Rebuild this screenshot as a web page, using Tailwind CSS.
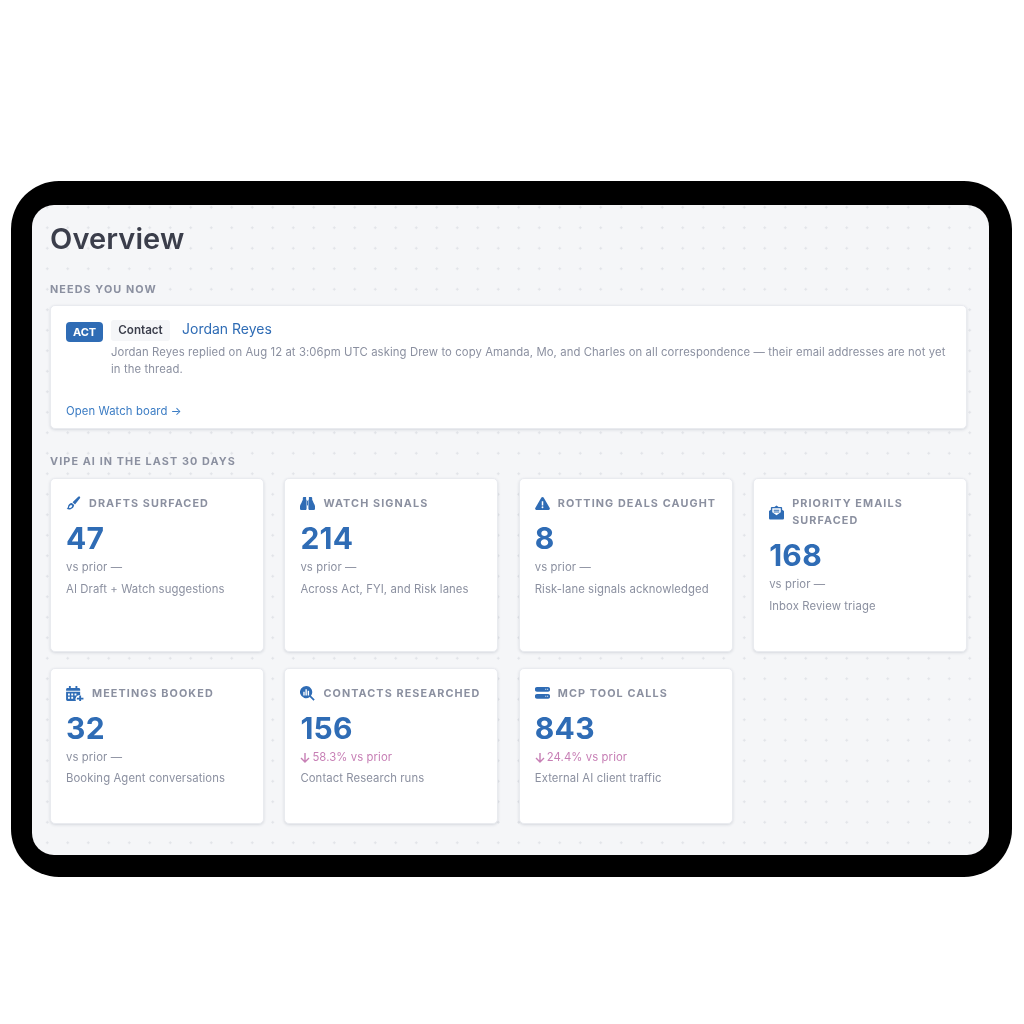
<!DOCTYPE html>
<html lang="en">
<head>
  <meta charset="UTF-8" />
  <title>Overview</title>
  <script src="https://cdn.jsdelivr.net/npm/@tailwindcss/browser@4"></script>
</head>
<body class="bg-white font-['Inter',sans-serif]">
  <div class="h-[1024px] pt-[181px] pl-[11px]">
    <div class="w-[1001px] h-[696px] bg-black rounded-[48px] pt-[24px] pl-[21px] blur-[0.35px]">
      <main class="w-[957px] h-[650px] rounded-[22px] overflow-hidden bg-[#f5f6f8] bg-[radial-gradient(circle,#e1e3e8_1px,transparent_1.2px)] bg-[size:20.5px_20.5px] bg-[position:5px_-8px] pt-[16px] pl-[18px] pr-[22px]">
        <h1 class="text-[29px] leading-[36px] font-semibold tracking-[0.1px] text-[#3b3e4b]">Overview</h1>

        <h2 class="mt-[26px] text-[10.8px] leading-[14px] font-bold tracking-[1.1px] text-[#8b90a0]">NEEDS YOU NOW</h2>
        <section class="mt-[8px] h-[124px] bg-white rounded-[5px] border border-[#e9ebef] shadow-[0_1px_3px_rgba(30,40,70,0.14)] pt-[14px] px-[15px]">
          <div class="flex">
            <span class="mt-[2px] w-[37px] h-[20px] rounded-[4px] bg-[#2f6cb5] text-white text-[11px] leading-[20px] font-bold text-center">ACT</span>
            <div class="ml-[8px] flex-1">
              <div class="flex items-start">
                <span class="h-[21px] w-[59px] rounded-[3px] bg-[#f5f6f8] text-[#3b3e4b] text-[11.6px] leading-[21px] font-semibold text-center">Contact</span>
                <span class="ml-[12px] -mt-[1px] text-[14px] leading-[20px] text-[#2f6cb5]">Jordan Reyes</span>
              </div>
              <p class="mt-[3px] text-[11.3px] leading-[17px] tracking-[0.1px] text-[#8b90a0]">Jordan Reyes replied on Aug 12 at 3:06pm UTC asking Drew to copy Amanda, Mo, and Charles on all correspondence — their email addresses are not yet in the thread.</p>
            </div>
          </div>
          <a class="block mt-[25px] text-[11.3px] leading-[16px] tracking-[0.1px] text-[#3b7cc4]">Open Watch board →</a>
        </section>

        <h2 class="mt-[26px] text-[10.8px] leading-[14px] font-bold tracking-[1.1px] text-[#8b90a0]">VIPE AI IN THE LAST 30 DAYS</h2>
        <div class="mt-[9px] grid grid-cols-4 grid-rows-[174px_156px] gap-x-[20.5px] gap-y-[16px]">

          <article class="bg-white rounded-[5px] border border-[#e9ebef] shadow-[0_1px_3px_rgba(30,40,70,0.14)] pt-[16px] px-[15px]">
            <div class="flex items-center gap-[8px] min-h-[17px]">
              <svg class="w-[15px] h-[15px] text-[#2f6cb5]" viewBox="0 0 16 16" fill="currentColor"><path d="M14.6.6c.6.4.7 1.200.3 1.800L9.600 9 7 6.600 13 .9c.5-.5 1.100-.6 1.600-.3z"/><path fill-rule="evenodd" d="M6.300 7.400l2.400 2.300c-.2 2.200-1.700 3.900-3.800 4.500-1.400.4-3 .2-4.200-.6.9-.4 1.200-1 1.300-1.900.2-2.300 2-4.200 4.300-4.300zM5.500 9.500c-1 .2-1.800 1-2 2-.1.500-.2 1-.4 1.300 1.700.2 3.300-1 3.600-2.500L5.500 9.500z"/></svg>
              <h3 class="text-[10.8px] leading-[17px] font-bold tracking-[1.1px] text-[#8b90a0]">DRAFTS SURFACED</h3>
            </div>
            <p class="mt-[7px] text-[30px] leading-[38px] font-bold tracking-[0.3px] text-[#2f6cb5]">47</p>
            <p class="mt-[2px] text-[11.3px] leading-[16px] tracking-[0.1px] text-[#8b90a0]">vs prior —</p>
            <p class="mt-[6px] text-[11.3px] leading-[16px] tracking-[0.1px] text-[#8b90a0]">AI Draft + Watch suggestions</p>
          </article>

          <article class="bg-white rounded-[5px] border border-[#e9ebef] shadow-[0_1px_3px_rgba(30,40,70,0.14)] pt-[16px] px-[15px]">
            <div class="flex items-center gap-[8px] min-h-[17px]">
              <svg class="w-[15px] h-[15px] text-[#2f6cb5]" viewBox="0 0 16 16" fill="currentColor"><path d="M4 1h2.500v3H7v9.500c0 .8-.7 1.500-1.500 1.500h-4C.7 15 0 14.300 0 13.500V11c0-2 1.500-3 2-5l1-2V2c0-.6.4-1 1-1z"/><path d="M12 1H9.500v3H9v9.500c0 .8.700 1.500 1.500 1.500h4c.8 0 1.500-.7 1.500-1.500V11c0-2-1.500-3-2-5l-1-2V2c0-.6-.4-1-1-1z"/><rect x="7.500" y="5" width="1" height="5"/></svg>
              <h3 class="text-[10.8px] leading-[17px] font-bold tracking-[1.1px] text-[#8b90a0]">WATCH SIGNALS</h3>
            </div>
            <p class="mt-[7px] text-[30px] leading-[38px] font-bold tracking-[0.3px] text-[#2f6cb5]">214</p>
            <p class="mt-[2px] text-[11.3px] leading-[16px] tracking-[0.1px] text-[#8b90a0]">vs prior —</p>
            <p class="mt-[6px] text-[11.3px] leading-[16px] tracking-[0.1px] text-[#8b90a0]">Across Act, FYI, and Risk lanes</p>
          </article>

          <article class="bg-white rounded-[5px] border border-[#e9ebef] shadow-[0_1px_3px_rgba(30,40,70,0.14)] pt-[16px] px-[15px]">
            <div class="flex items-center gap-[8px] min-h-[17px]">
              <svg class="w-[15px] h-[15px] text-[#2f6cb5]" viewBox="0 0 16 16" fill="currentColor"><path fill-rule="evenodd" d="M8 1c.5 0 .9.300 1.200.700l6.500 11c.5.900-.1 2.300-1.200 2.300H1.500C.4 15-.2 13.600.3 12.700l6.500-11C7.100 1.300 7.500 1 8 1zM7.200 5.500v4.500h1.600V5.500H7.200zM8 11a1 1 0 1 0 0 2 1 1 0 0 0 0-2z"/></svg>
              <h3 class="text-[10.8px] leading-[17px] font-bold tracking-[1.1px] text-[#8b90a0]">ROTTING DEALS CAUGHT</h3>
            </div>
            <p class="mt-[7px] text-[30px] leading-[38px] font-bold tracking-[0.3px] text-[#2f6cb5]">8</p>
            <p class="mt-[2px] text-[11.3px] leading-[16px] tracking-[0.1px] text-[#8b90a0]">vs prior —</p>
            <p class="mt-[6px] text-[11.3px] leading-[16px] tracking-[0.1px] text-[#8b90a0]">Risk-lane signals acknowledged</p>
          </article>

          <article class="bg-white rounded-[5px] border border-[#e9ebef] shadow-[0_1px_3px_rgba(30,40,70,0.14)] pt-[16px] px-[15px]">
            <div class="flex items-center gap-[8px] min-h-[17px]">
              <svg class="w-[15px] h-[15px] shrink-0 text-[#2f6cb5]" viewBox="0 0 16 16" fill="currentColor"><path fill-rule="evenodd" d="M8 .5l2.200 1.500H13c.6 0 1 .4 1 1v2l2 1.500V14c0 .8-.7 1.500-1.500 1.500h-13C.7 15.500 0 14.800 0 14V6.500L2 5V3c0-.6.4-1 1-1h2.800L8 .5zM3.500 3.500v4.300L8 10.800l4.500-3V3.500h-9zM5 5h6v1H5V5zm0 2h6v1H5V7z"/></svg>
              <h3 class="text-[10.8px] leading-[17px] font-bold tracking-[1.1px] text-[#8b90a0]">PRIORITY EMAILS SURFACED</h3>
            </div>
            <p class="mt-[7px] text-[30px] leading-[38px] font-bold tracking-[0.3px] text-[#2f6cb5]">168</p>
            <p class="mt-[2px] text-[11.3px] leading-[16px] tracking-[0.1px] text-[#8b90a0]">vs prior —</p>
            <p class="mt-[6px] text-[11.3px] leading-[16px] tracking-[0.1px] text-[#8b90a0]">Inbox Review triage</p>
          </article>

          <article class="bg-white rounded-[5px] border border-[#e9ebef] shadow-[0_1px_3px_rgba(30,40,70,0.14)] pt-[16px] px-[15px]">
            <div class="flex items-center gap-[8px] min-h-[17px]">
              <svg class="w-[18px] h-[15px] text-[#2f6cb5]" viewBox="0 0 19 16" fill="currentColor"><path fill-rule="evenodd" d="M3 0h2v2h5V0h2v2h1.500c.8 0 1.500.7 1.500 1.500V5H0V3.500C0 2.700.7 2 1.500 2H3V0zM0 6h15v3.500a4.500 4.500 0 0 0-4.500 6.500H1.500C.7 16 0 15.300 0 14.500V6zm2 2v2h2V8H2zm3.500 0v2h2V8h-2zM9 8v2h2V8H9zm-7 3.500v2h2v-2H2zm3.500 0v2h2v-2h-2z"/><path d="M14 10h2v2.500h2.500v2H16V16h-2v-1.500h-2.500v-2H14V10z"/></svg>
              <h3 class="text-[10.8px] leading-[17px] font-bold tracking-[1.1px] text-[#8b90a0]">MEETINGS BOOKED</h3>
            </div>
            <p class="mt-[7px] text-[30px] leading-[38px] font-bold tracking-[0.3px] text-[#2f6cb5]">32</p>
            <p class="mt-[2px] text-[11.3px] leading-[16px] tracking-[0.1px] text-[#8b90a0]">vs prior —</p>
            <p class="mt-[5px] text-[11.3px] leading-[16px] tracking-[0.1px] text-[#8b90a0]">Booking Agent conversations</p>
          </article>

          <article class="bg-white rounded-[5px] border border-[#e9ebef] shadow-[0_1px_3px_rgba(30,40,70,0.14)] pt-[16px] px-[15px]">
            <div class="flex items-center gap-[8px] min-h-[17px]">
              <svg class="w-[15px] h-[15px] text-[#2f6cb5]" viewBox="0 0 16 16" fill="currentColor"><path fill-rule="evenodd" d="M6.500 0a6.500 6.500 0 0 1 5.200 10.400l4 4-1.300 1.300-4-4A6.500 6.500 0 1 1 6.500 0zM3.500 6v4h1.500V6H3.500zm2.300-2.500V10h1.500V3.500H5.800zM8.200 5v5h1.500V5H8.200z"/></svg>
              <h3 class="text-[10.8px] leading-[17px] font-bold tracking-[1.1px] text-[#8b90a0]">CONTACTS RESEARCHED</h3>
            </div>
            <p class="mt-[7px] text-[30px] leading-[38px] font-bold tracking-[0.3px] text-[#2f6cb5]">156</p>
            <p class="mt-[2px] flex items-center gap-[2px] text-[11.3px] leading-[16px] tracking-[0.1px] text-[#c77fb5]">
              <svg class="w-[10px] h-[11px]" viewBox="0 0 10 11" fill="none" stroke="currentColor" stroke-width="1.400"><path d="M5 1v9M1 6l4 4 4-4"/></svg>
              58.3% vs prior
            </p>
            <p class="mt-[5px] text-[11.3px] leading-[16px] tracking-[0.1px] text-[#8b90a0]">Contact Research runs</p>
          </article>

          <article class="bg-white rounded-[5px] border border-[#e9ebef] shadow-[0_1px_3px_rgba(30,40,70,0.14)] pt-[16px] px-[15px]">
            <div class="flex items-center gap-[8px] min-h-[17px]">
              <svg class="w-[15px] h-[15px] text-[#2f6cb5]" viewBox="0 0 16 16" fill="currentColor"><path fill-rule="evenodd" d="M2 1h12c1 0 2 .8 2 1.800v1.400C16 5.200 15 6 14 6H2C1 6 0 5.200 0 4.200V2.800C0 1.800 1 1 2 1zm9 2v1h1V3h-1zm2 0v1h1V3h-1zM2 8.500h12c1 0 2 .8 2 1.800v1.400c0 1-1 1.800-2 1.800H2c-1 0-2-.8-2-1.800v-1.400c0-1 1-1.800 2-1.800zm9 2v1h1v-1h-1zm2 0v1h1v-1h-1z"/></svg>
              <h3 class="text-[10.8px] leading-[17px] font-bold tracking-[1.1px] text-[#8b90a0]">MCP TOOL CALLS</h3>
            </div>
            <p class="mt-[7px] text-[30px] leading-[38px] font-bold tracking-[0.3px] text-[#2f6cb5]">843</p>
            <p class="mt-[2px] flex items-center gap-[2px] text-[11.3px] leading-[16px] tracking-[0.1px] text-[#c77fb5]">
              <svg class="w-[10px] h-[11px]" viewBox="0 0 10 11" fill="none" stroke="currentColor" stroke-width="1.400"><path d="M5 1v9M1 6l4 4 4-4"/></svg>
              24.4% vs prior
            </p>
            <p class="mt-[5px] text-[11.3px] leading-[16px] tracking-[0.1px] text-[#8b90a0]">External AI client traffic</p>
          </article>
        </div>
      </main>
    </div>
  </div>
</body>
</html>
